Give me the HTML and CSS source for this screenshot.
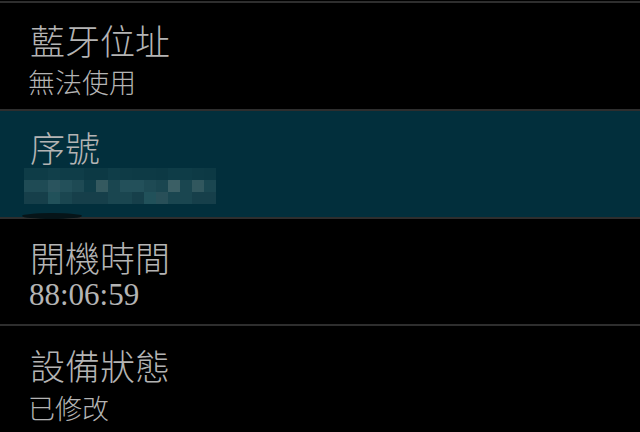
FILE: index.html
```html
<!DOCTYPE html>
<html lang="zh-Hant">
<head>
<meta charset="utf-8">
<link rel="stylesheet" href="styles.css">
</head>
<body>
<div class="list">
  <div class="divider"></div>
  <div class="row r1">
    <div class="title">藍牙位址</div>
    <div class="sub">無法使用</div>
  </div>
  <div class="divider"></div>
  <div class="row r2 selected">
    <div class="title">序號</div>
    <div class="mosaic">
      <i style="background:#0e3c47"></i><i style="background:#0e3c47"></i><i style="background:#113f4a"></i><i style="background:#0f3d48"></i><i style="background:#0f3d48"></i><i style="background:#0c3944"></i><i style="background:#0c3944"></i><i style="background:#0f3d48"></i><i style="background:#0e3b46"></i><i style="background:#0d3a45"></i><i style="background:#0d3a45"></i><i style="background:#0c3944"></i><i style="background:#0e3c47"></i><i style="background:#0e3c47"></i><i style="background:#0d3a45"></i><i style="background:#0c3944"></i>
      <i style="background:#1f4b55"></i><i style="background:#1f4b55"></i><i style="background:#2a545e"></i><i style="background:#23505a"></i><i style="background:#1e4a54"></i><i style="background:#103e49"></i><i style="background:#34595f"></i><i style="background:#1a4650"></i><i style="background:#23505a"></i><i style="background:#23505a"></i><i style="background:#1e4a54"></i><i style="background:#1a4650"></i><i style="background:#3b5f65"></i><i style="background:#1a4650"></i><i style="background:#31575e"></i><i style="background:#1a4650"></i>
      <i style="background:#163f4a"></i><i style="background:#163f4a"></i><i style="background:#21515a"></i><i style="background:#1a4650"></i><i style="background:#163f4a"></i><i style="background:#163f4a"></i><i style="background:#163f4a"></i><i style="background:#1a4650"></i><i style="background:#1a4650"></i><i style="background:#163f4a"></i><i style="background:#21515a"></i><i style="background:#284f58"></i><i style="background:#1a4650"></i><i style="background:#1a4650"></i><i style="background:#163f4a"></i><i style="background:#163f4a"></i>
    </div>
    <div class="shadow"></div>
  </div>
  <div class="divider"></div>
  <div class="row r3">
    <div class="title">開機時間</div>
    <div class="sub num">88:06:59</div>
  </div>
  <div class="divider"></div>
  <div class="row r4">
    <div class="title">設備狀態</div>
    <div class="sub">已修改</div>
  </div>
</div>
</body>
</html>
```
FILE: styles.css
```css
html, body {
  margin: 0;
  padding: 0;
  background: #000;
  width: 640px;
  height: 432px;
  overflow: hidden;
}
.list {
  padding-top: 1px;
  display: flex;
  flex-direction: column;
  font-family: "Noto Sans CJK TC", "Noto Sans CJK SC", sans-serif;
  color: #b4b4b4;
}
.divider {
  height: 2px;
  background: #2e2e2e;
}
.row {
  position: relative;
  display: flex;
  flex-direction: column;
  padding: 20px 0 0 30px;
  box-sizing: border-box;
}
.r1 { height: 106px; padding-top: 19px; }
.r2 { height: 106px; padding-top: 18px; }
.r3 { height: 105px; }
.r4 { height: 106px; padding-top: 21px; }
.selected {
  background: #022f3c;
}
.title {
  font-size: 35px;
  line-height: 35px;
  font-weight: 300;
}
.sub {
  font-size: 27px;
  line-height: 27px;
  margin-top: 11px;
  margin-left: -2px;
  font-weight: 300;
}
.num {
  font-family: "Liberation Serif", serif;
  font-size: 31px;
  line-height: 24px;
  margin-top: 9px;
  margin-left: -1px;
}
.r4 .sub { margin-top: 12px; }
.mosaic {
  margin-top: 4px;
  margin-left: -6px;
  display: grid;
  grid-template-columns: repeat(16, 12px);
  grid-auto-rows: 12px;
  width: 192px;
}
.mosaic i {
  display: block;
}
.shadow {
  position: absolute;
  left: 22px;
  bottom: -2px;
  width: 60px;
  height: 6px;
  border-radius: 50%;
  background: #061418;
}
```
